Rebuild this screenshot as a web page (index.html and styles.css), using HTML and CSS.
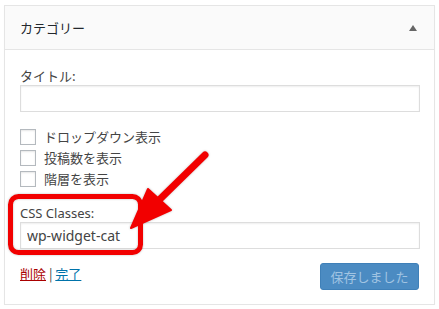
FILE: index.html
```html
<!DOCTYPE html>
<html lang="ja">
<head>
<meta charset="UTF-8">
<meta name="viewport" content="width=device-width, initial-scale=1.0">
<title>カテゴリー ウィジェット</title>
<link rel="stylesheet" href="styles.css">
</head>
<body>

  <div class="widget">
    <div class="widget-top">
      <h3 class="widget-title">カテゴリー</h3>
      <span class="toggle-arrow"></span>
    </div>

    <div class="widget-inside">
      <p class="field">
        <label for="title">タイトル:</label>
        <input type="text" id="title" class="text-input" value="">
      </p>

      <div class="checks">
        <label class="check"><input type="checkbox"><span>ドロップダウン表示</span></label>
        <label class="check"><input type="checkbox"><span>投稿数を表示</span></label>
        <label class="check"><input type="checkbox"><span>階層を表示</span></label>
      </div>

      <p class="field field-classes">
        <label for="classes">CSS Classes:</label>
        <input type="text" id="classes" class="text-input" value="wp-widget-cat">
      </p>

      <div class="widget-actions">
        <div class="links">
          <a href="#" class="delete">削除</a> | <a href="#" class="done">完了</a>
        </div>
        <button type="button" class="save-button" disabled>保存しました</button>
      </div>
    </div>

    <!-- annotation drawn over the form -->
    <svg class="callout" width="439" height="309" viewBox="0 0 439 309">
      <rect x="10.5" y="196.5" width="130" height="56" rx="8" fill="none" stroke="#f20000" stroke-width="5"/>
      <line x1="205" y1="155" x2="156" y2="203" stroke="#f20000" stroke-width="7" stroke-linecap="round"/>
      <polygon points="131,228 148,189 171,210" fill="#f20000" stroke="#f20000" stroke-width="2" stroke-linejoin="round"/>
    </svg>
  </div>

</body>
</html>
```

FILE: styles.css
```css
body {
  margin: 0;
  padding: 0;
  background-color: #fff;
  font-family: "Noto Sans", "Noto Sans CJK JP", sans-serif;
  font-size: 13px;
  color: #444;
}

.widget {
  margin: 5px 4px 0;
  width: 429px;
  border: 1px solid #e5e5e5;
  box-shadow: 0 1px 1px rgba(0, 0, 0, 0.04);
  background-color: #fff;
}

.widget-top {
  height: 43px;
  padding: 0 17px 0 15px;
  display: flex;
  justify-content: space-between;
  align-items: center;
  background-color: #fafafa;
  border-bottom: 1px solid #e5e5e5;
}

.widget-title {
  margin: 0;
  font-size: 13px;
  font-weight: 400;
  color: #23282d;
  font-family: "Noto Sans CJK JP", sans-serif;
}

.toggle-arrow {
  width: 0;
  height: 0;
  border-left: 4px solid transparent;
  border-right: 4px solid transparent;
  border-bottom: 6px solid #666;
}

.widget-inside {
  padding: 16px 15px 14px;
}

.field {
  margin: 0;
}

.field label {
  display: block;
  height: 19px;
  line-height: 19px;
  font-family: "Noto Sans CJK JP", sans-serif;
}

.field-classes {
  margin-top: 15px;
}

.field-classes label {
  height: 18px;
  line-height: 18px;
  font-family: "Noto Sans", sans-serif;
}

.text-input {
  display: block;
  box-sizing: border-box;
  width: 400px;
  height: 27px;
  margin: 0;
  padding: 0 6px;
  border: 1px solid #ddd;
  box-shadow: inset 0 1px 2px rgba(0, 0, 0, 0.07);
  font-family: "Noto Sans", sans-serif;
  font-size: 14px;
  color: #444;
}

.checks {
  margin-top: 14px;
}

.check {
  display: flex;
  align-items: center;
  height: 21px;
  font-family: "Noto Sans CJK JP", sans-serif;
}

.check input {
  appearance: none;
  width: 16px;
  height: 16px;
  margin: 0 8px 0 0;
  border: 1px solid #b4b9be;
  background-color: #fff;
  box-shadow: inset 0 1px 2px rgba(0, 0, 0, 0.1);
}

.widget-actions {
  margin-top: 14px;
  display: flex;
  justify-content: space-between;
  align-items: flex-start;
}

.links {
  line-height: 18px;
  padding-top: 2px;
  font-family: "Noto Sans CJK JP", sans-serif;
}

.links .delete {
  color: #a00;
}

.links .done {
  color: #0073aa;
}

.save-button {
  width: 99px;
  height: 27px;
  padding: 0;
  border: 1px solid #3f80b8;
  border-radius: 3px;
  background-color: #4b8bc2;
  color: #a1c4e2;
  font-family: "Noto Sans CJK JP", sans-serif;
  font-size: 13px;
}

.callout {
  position: absolute;
  left: 0;
  top: 0;
  pointer-events: none;
  filter: drop-shadow(0 0 1px rgba(0, 0, 0, 0.25));
}
```
